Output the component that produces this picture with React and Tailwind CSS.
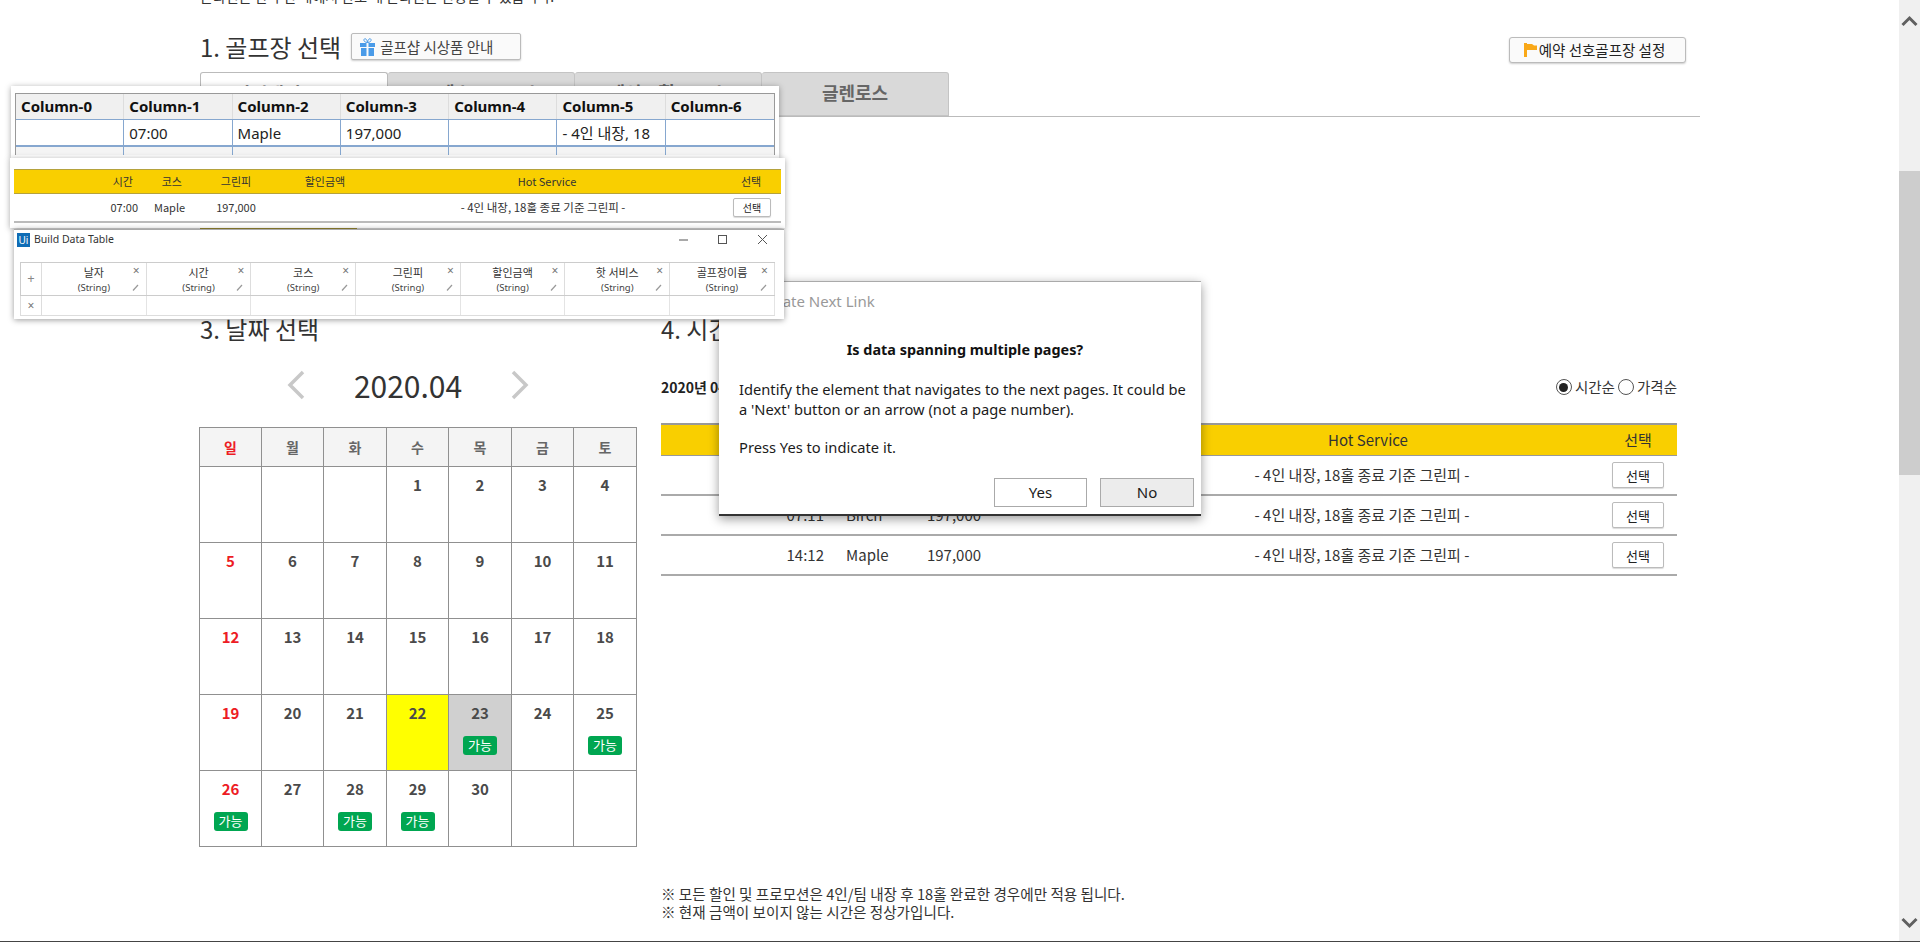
const KR = "font-['Noto_Sans_CJK_KR','Noto_Sans',sans-serif]";

const weeks = [
  [null, null, null, 1, 2, 3, 4],
  [5, 6, 7, 8, 9, 10, 11],
  [12, 13, 14, 15, 16, 17, 18],
  [19, 20, 21, 22, 23, 24, 25],
  [26, 27, 28, 29, 30, null, null],
];
const open = [23, 25, 26, 28, 29];
const dayNames = ['일', '월', '화', '수', '목', '금', '토'];
const colW = ['w-[62px]', 'w-[62px]', 'w-[63px]', 'w-[62px]', 'w-[63px]', 'w-[62px]', 'w-[63px]'];

const PickButton = ({ small }) => (
  <button
    className={
      small
        ? 'w-[38px] h-[19px] border border-[#bbb] rounded-[2px] bg-white text-[10px] leading-none text-[#222] shadow-[0_1px_1px_rgba(0,0,0,0.15)]'
        : 'w-[52px] h-[26px] border border-[#bbb] rounded-[2px] bg-white text-[13px] leading-none text-[#222] shadow-[0_1px_1px_rgba(0,0,0,0.15)]'
    }
  >
    선택
  </button>
);

const Calendar = () => (
  <div className="w-[438px] border-t border-r border-[#909090]">
    <div className="flex h-[39px] bg-[#f4f4f4] border-b border-[#909090]">
      {dayNames.map((d, i) => (
        <div
          key={d}
          className={`${colW[i]} border-l border-[#909090] flex items-center justify-center text-[14px] font-bold ${i === 0 ? 'text-[#ed1c24]' : 'text-[#666]'}`}
        >
          {d}
        </div>
      ))}
    </div>
    {weeks.map((week, w) => (
      <div key={w} className="flex h-[76px] border-b border-[#909090]">
        {week.map((day, i) => (
          <div
            key={i}
            className={`${colW[i]} border-l border-[#909090] flex flex-col items-center pt-[6px] ${day === 22 ? 'bg-[#ffff00]' : day === 23 ? 'bg-[#d0d0d0]' : 'bg-white'}`}
          >
            <span className={`h-[24px] leading-[24px] text-[15px] font-bold ${i === 0 ? 'text-[#ed1c24]' : 'text-[#4a4a4a]'}`}>{day}</span>
            {open.includes(day) && (
              <span className="mt-[11px] w-[34px] h-[19px] rounded-[3px] bg-[#00a651] text-white text-[13px] leading-[18px] text-center">가능</span>
            )}
          </div>
        ))}
      </div>
    ))}
  </div>
);

const timeRows = [
  ['07:00', 'Maple'],
  ['07:11', 'Birch'],
  ['14:12', 'Maple'],
];

const TimeTable = () => (
  <div className="w-[1016px] text-[15px] text-[#333]">
    <div className="flex items-center h-[33px] bg-[#f9cf00] border-t-2 border-b border-[#999]">
      <div className="w-[163px] text-right">시간</div>
      <div className="w-[70px] ml-[22px]">코스</div>
      <div className="w-[76px] text-center">그린피</div>
      <div className="w-[131px] text-center">할인금액</div>
      <div className="w-[476px] text-center pl-[14px]">Hot Service</div>
      <div className="w-[78px] text-center">선택</div>
    </div>
    {timeRows.map(([time, course]) => (
      <div key={time} className="flex items-center h-[40px] border-b-2 border-[#aaa]">
        <div className="w-[163px] text-right">{time}</div>
        <div className="w-[70px] ml-[22px]">{course}</div>
        <div className="w-[76px] text-center">197,000</div>
        <div className="w-[131px]" />
        <div className="w-[476px] text-center pl-[2px]">- 4인 내장, 18홀 종료 기준 그린피 -</div>
        <div className="w-[78px] flex justify-center">
          <PickButton />
        </div>
      </div>
    ))}
  </div>
);

const ColumnsShot = () => {
  const cols = ['Column-0', 'Column-1', 'Column-2', 'Column-3', 'Column-4', 'Column-5', 'Column-6'];
  const vals = ['', '07:00', 'Maple', '197,000', '', '- 4인 내장, 18', ''];
  return (
    <div className="absolute left-[11px] top-[86px] w-[768px] h-[72px] bg-white pl-[4px] pt-[7px] shadow-[0_1px_6px_rgba(0,0,0,0.35)] overflow-hidden z-20">
      <div className="w-[760px] border-t border-x border-[#999]">
        <div className="grid grid-cols-7 h-[25px] bg-[#f0f0f0]">
          {cols.map((c) => (
            <div key={c} className="border-r border-[#ddd] last:border-r-0 px-[5px] text-[15px] leading-[24px] font-bold text-[#111] font-['Noto_Sans',sans-serif] overflow-hidden whitespace-nowrap">{c}</div>
          ))}
        </div>
        <div className="grid grid-cols-7 h-[28px] border-t border-b-2 border-[#86a7cf] bg-white">
          {vals.map((v, i) => (
            <div key={i} className="border-r border-[#86a7cf] last:border-r-0 px-[5px] text-[15px] leading-[26px] text-[#222] font-['Noto_Sans','Noto_Sans_CJK_KR',sans-serif] overflow-hidden whitespace-nowrap">{v}</div>
          ))}
        </div>
        <div className="grid grid-cols-7 h-[8px] bg-[#f4f4f4]">
          {vals.map((v, i) => (
            <div key={i} className="border-r border-[#86a7cf] last:border-r-0" />
          ))}
        </div>
      </div>
    </div>
  );
};

const RowShot = () => (
  <div className="absolute left-[10px] top-[158px] w-[775px] h-[70px] bg-white pl-[4px] pt-[11px] shadow-[0_1px_6px_rgba(0,0,0,0.35)] z-20 text-[11px] text-[#333]">
    <div className="flex items-center w-[767px] h-[25px] bg-[#f9cf00] border-t border-b border-[#b5a23c]">
      <div className="w-[119px] text-right">시간</div>
      <div className="w-[49px] text-right">코스</div>
      <div className="w-[66px] text-center ml-[21px]">그린피</div>
      <div className="w-[80px] text-center ml-[16px]">할인금액</div>
      <div className="w-[200px] text-center ml-[82px]">Hot Service</div>
      <div className="w-[40px] text-center ml-[84px]">선택</div>
    </div>
    <div className="flex items-center w-[767px] h-[29px] border-b-2 border-[#bbb]">
      <div className="w-[124px] text-right">07:00</div>
      <div className="w-[50px] ml-[16px]">Maple</div>
      <div className="w-[64px] text-center">197,000</div>
      <div className="w-[200px] text-center ml-[175px] text-[11.500px] whitespace-nowrap">- 4인 내장, 18홀 종료 기준 그린피 -</div>
      <div className="ml-[90px]"><PickButton small /></div>
    </div>
  </div>
);

const builderCols = ['날자', '시간', '코스', '그린피', '할인금액', '핫 서비스', '골프장이름'];

const BuilderShot = () => (
  <div className="absolute left-[14px] top-[229px] w-[770px] h-[90px] bg-white border-t border-[#aaa] shadow-[0_1px_6px_rgba(0,0,0,0.4)] z-30 overflow-hidden text-[#444] font-['Noto_Sans','Noto_Sans_CJK_KR',sans-serif]">
    <div className="flex items-center h-[32px] pb-[12px] pl-[3px]">
      <span className="w-[13px] h-[14px] bg-[#0f6cb5] text-white text-[10px] leading-[14px] text-center">Ui</span>
      <span className="ml-[4px] text-[10.500px] text-[#333]">Build Data Table</span>
      <svg className="ml-auto mr-[13px]" width="92" height="14" viewBox="0 0 92 14" fill="none" stroke="#555" strokeWidth="1">
        <path d="M0 7h9" />
        <rect x="39.500" y="2.500" width="8" height="8" />
        <path d="M79 2l9 9M88 2l-9 9" />
      </svg>
    </div>
    <div className="flex ml-[6px] w-[755px] h-[34px] border-y border-l border-[#ccc]">
      <div className="w-[21px] flex items-center justify-center text-[13px] text-[#888] border-r border-[#ddd]">+</div>
      {builderCols.map((c) => (
        <div key={c} className="relative w-[104.7px] border-r border-[#ddd] flex flex-col items-center">
          <span className="text-[11px] leading-[18px] text-[#333] font-['Noto_Sans_CJK_KR',sans-serif]">{c}</span>
          <span className="text-[9.500px] leading-[14px]">(String)</span>
          <span className="absolute right-[6px] top-[2px] text-[12px] leading-none text-[#777]">×</span>
          <svg className="absolute right-[7px] top-[21px]" width="7" height="7" viewBox="0 0 7 7" stroke="#999" strokeWidth="1.2">
            <path d="M1 6.500L6 1" />
          </svg>
        </div>
      ))}
    </div>
    <div className="flex ml-[6px] w-[755px] h-[20px] border-b border-l border-[#ddd]">
      <div className="w-[21px] flex items-center justify-center text-[12px] text-[#777] border-r border-[#ddd]">×</div>
      {builderCols.map((c) => (
        <div key={c} className="w-[104.7px] border-r border-[#e4e4e4]" />
      ))}
    </div>
  </div>
);

const NextLinkDialog = () => (
  <div className="absolute left-[719px] top-[281px] w-[482px] h-[235px] bg-white border-t border-[#aaa] border-b-2 border-b-[#333] shadow-[0_3px_10px_rgba(0,0,0,0.4)] z-10 font-['Noto_Sans',sans-serif] text-[#1b1b1b]">
    <div className="pl-[29px] pt-[9px] text-[15px] leading-[20px] text-[#999]">Indicate Next Link</div>
    <div className="mt-[29px] pl-[10px] text-center text-[14.400px] leading-[20px] font-bold text-[#111]">Is data spanning multiple pages?</div>
    <div className="mt-[19px] px-[20px] text-[14.700px] leading-[20px] whitespace-nowrap">
      <p>Identify the element that navigates to the next pages. It could be</p>
      <p>a 'Next' button or an arrow (not a page number).</p>
      <p className="mt-[18px]">Press Yes to indicate it.</p>
    </div>
    <div className="absolute right-[7px] bottom-[7px] flex gap-[13px] text-[15px]">
      <button className="w-[93px] h-[29px] border border-[#aaa] bg-white">Yes</button>
      <button className="w-[94px] h-[29px] border border-[#aaa] bg-[#ececec]">No</button>
    </div>
  </div>
);

const Scrollbar = () => (
  <div className="w-[21px] shrink-0 bg-[#f0f0f0] flex flex-col items-center">
    <svg className="mt-[15px]" width="17" height="12" viewBox="0 0 17 12" fill="none" stroke="#606060" strokeWidth="3">
      <path d="M1.500 10L8.500 3l7 7" />
    </svg>
    <div className="w-full h-[304px] mt-[144px] bg-[#cdcdcd]" />
    <svg className="mt-auto mb-[12px]" width="17" height="12" viewBox="0 0 17 12" fill="none" stroke="#606060" strokeWidth="3">
      <path d="M1.500 2l7 7 7-7" />
    </svg>
  </div>
);

const Radio = ({ checked }) => (
  <span className="w-[16px] h-[16px] rounded-full border border-[#555] bg-white flex items-center justify-center">
    {checked && <span className="w-[9px] h-[9px] rounded-full bg-[#222]" />}
  </span>
);

export default function App() {
  return (
    <div className={`relative flex w-[1920px] h-[942px] overflow-hidden bg-white border-b border-[#444] ${KR}`}>
      <div className="flex-1 pl-[200px] min-w-0">
        <div className="w-[1500px]">
          <p className="-mt-[15px] h-[33px] text-[14px] leading-[22px] text-[#333]">온라인은 한 주간 내에서 한도 내 온라인은 변경될 수 있습니다.</p>

          <div className="flex items-start h-[39px] mt-[15px]">
            <h2 className="text-[24px] leading-[28px] font-normal text-[#333]">1. 골프장 선택</h2>
            <button className="flex items-center h-[27px] w-[170px] ml-[10px] pl-[8px] gap-[5px] border border-[#bbb] rounded-[2px] bg-[#fafafa] text-[14.500px] text-[#444] shadow-[0_1px_2px_rgba(0,0,0,0.2)]">
              <svg width="15" height="18" viewBox="0 0 15 18" fill="#4a9be8">
                <path d="M0 5h6.500v4H0zM8.500 5H15v4H8.500zM1 10h5.500v8H1zM8.500 10H14v8H8.500z" />
                <path d="M7.500 4.500C5 4.500 3.500 3 4 1.500S7 .5 7.500 4.500C8 .5 10.500 0 11 1.500s-1 3-3.500 3z" fill="none" stroke="#4a9be8" />
              </svg>
              골프샵 시상품 안내
            </button>
            <button className="flex items-center justify-center gap-[2px] h-[26px] w-[177px] mt-[4px] ml-auto mr-[14px] pr-[6px] border border-[#bbb] rounded-[3px] bg-[#fafafa] text-[14.500px] text-[#222] shadow-[0_1px_2px_rgba(0,0,0,0.2)]">
              <svg width="13" height="14" viewBox="0 0 13 14" fill="#f9a818">
                <path d="M0 0h3v14H0zM3 1h5l2 1.500h3v4.500H3z" />
              </svg>
              예약 선호골프장 설정
            </button>
          </div>

          <div className="flex h-[45px] border-b border-[#bbb]">
            <div className="w-[188px] h-[45px] pb-[4px] bg-white border border-[#bbb] border-b-0 rounded-t-[3px] flex items-center justify-center text-[18px] font-bold text-[#666]">파인밸리 A 코스</div>
            {['포레스트 A 코스', '레이크힐 A 코스', '글렌로스'].map((t) => (
              <div key={t} className="w-[187px] h-[44px] pb-[4px] bg-[#d9d9d9] border border-[#c4c4c4] border-l-0 rounded-t-[3px] flex items-center justify-center text-[18px] font-bold text-[#666]">{t}</div>
            ))}
          </div>

          <h2 className="mt-[34px] text-[24px] leading-[28px] font-normal text-[#333]">2. 예약 선택</h2>
          <div className="mt-[32px] w-[157px] h-[20px] bg-[#b5a23c]" />

          <div className="flex mt-[84px]">
            <div className="w-[462px] shrink-0 -ml-[1px]">
              <h2 className="pl-[1px] text-[24px] leading-[28px] font-normal text-[#333]">3. 날짜 선택</h2>
              <div className="flex items-center justify-center h-[40px] mt-[22px] mb-[22px] w-[438px] pr-[20px]">
                <svg width="20" height="30" viewBox="0 0 20 30" fill="none" stroke="#c8c8c8" strokeWidth="3.500">
                  <path d="M17 2L4 15l13 13" />
                </svg>
                <span className="mx-[48px] text-[30px] font-normal text-[#333]">2020.04</span>
                <svg width="20" height="30" viewBox="0 0 20 30" fill="none" stroke="#c8c8c8" strokeWidth="3.500">
                  <path d="M3 2l13 13L3 28" />
                </svg>
              </div>
              <Calendar />
            </div>

            <div className="w-[1016px] shrink-0">
              <h2 className="text-[24px] leading-[28px] font-normal text-[#333]">4. 시간 선택</h2>
              <div className="flex items-center justify-between h-[40px] mt-[24px] mb-[16px]">
                <span className="text-[14px] font-bold text-[#222]">2020년 04월 22일</span>
                <div className="flex items-center gap-[3px] text-[14.500px] text-[#333]">
                  <Radio checked />
                  <span>시간순</span>
                  <Radio />
                  <span>가격순</span>
                </div>
              </div>
              <TimeTable />
              <div className="mt-[309px] text-[14.600px] leading-[18px] text-[#333]">
                <p>※ 모든 할인 및 프로모션은 4인/팀 내장 후 18홀 완료한 경우에만 적용 됩니다.</p>
                <p>※ 현재 금액이 보이지 않는 시간은 정상가입니다.</p>
              </div>
            </div>
          </div>
        </div>
      </div>

      <Scrollbar />
      <NextLinkDialog />
      <ColumnsShot />
      <RowShot />
      <BuilderShot />
    </div>
  );
}
